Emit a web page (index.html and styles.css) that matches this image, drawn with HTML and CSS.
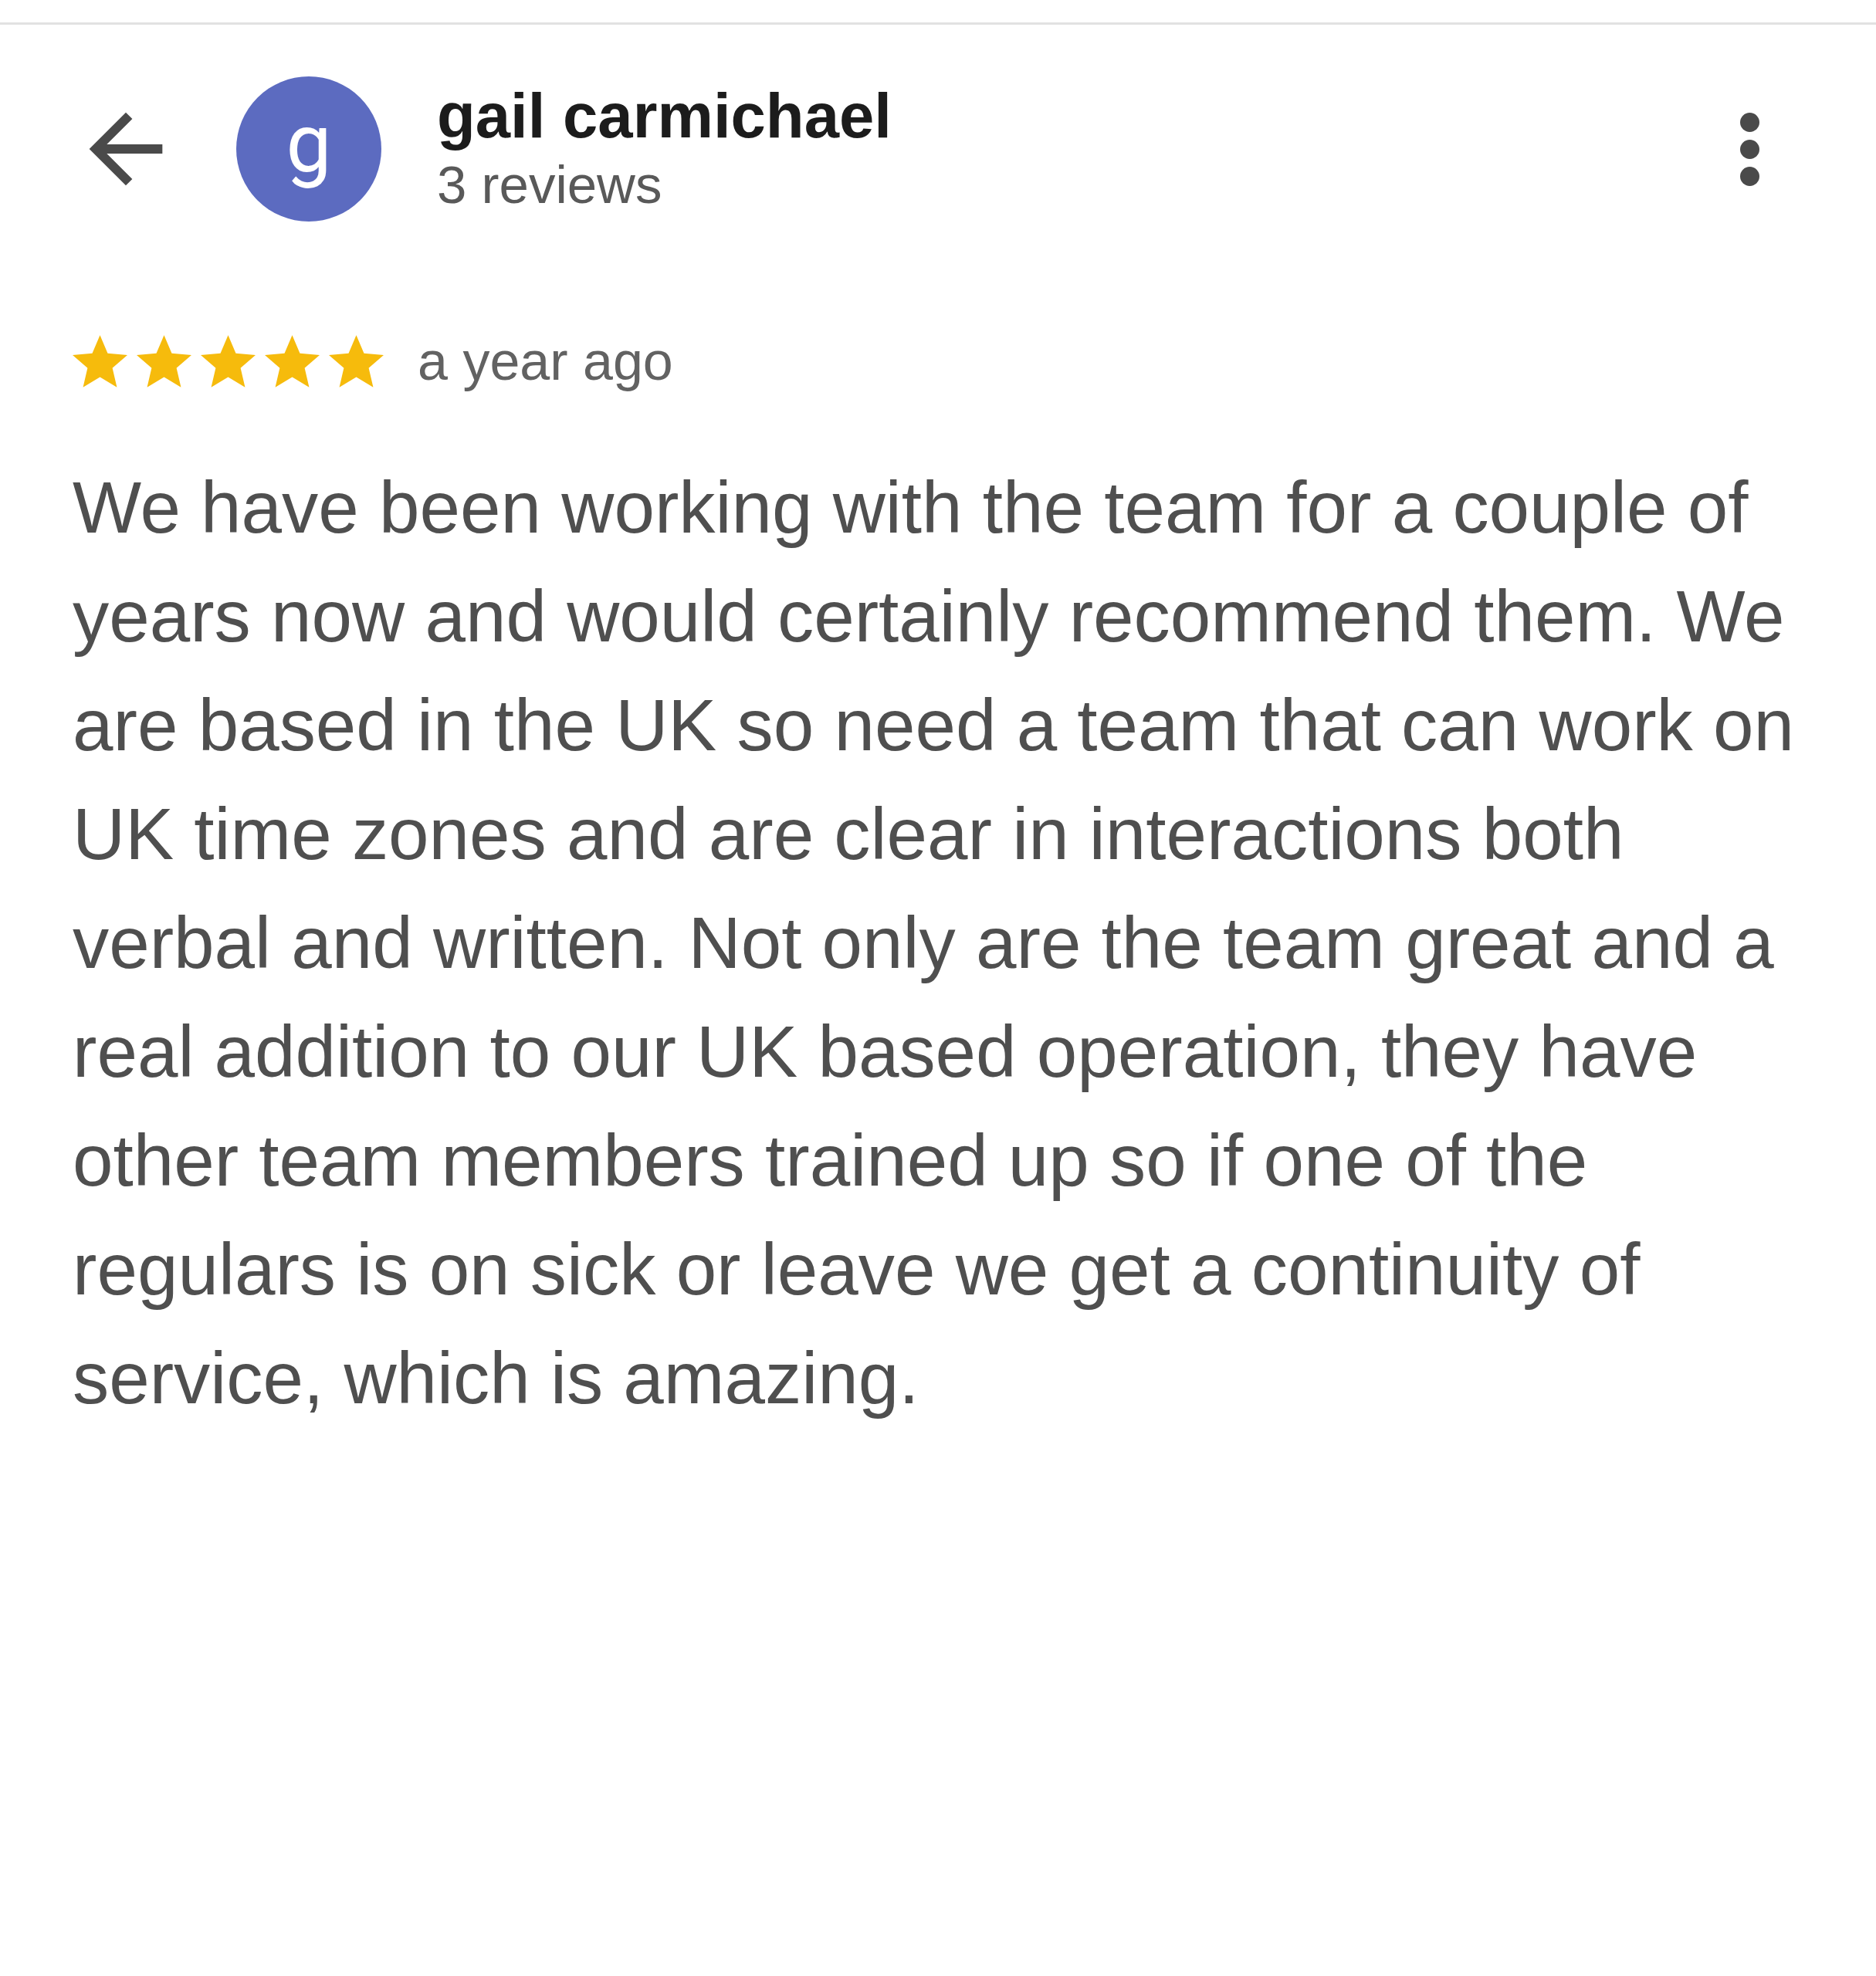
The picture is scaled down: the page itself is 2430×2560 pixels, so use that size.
FILE: index.html
```html
<!DOCTYPE html>
<html lang="en">
<head>
<meta charset="utf-8">
<title>Review</title>
<link rel="stylesheet" href="styles.css">
</head>
<body>
<div class="topline"></div>
<header class="header">
  <svg class="back" viewBox="0 0 24 24" aria-label="Back"><path d="M20 11H7.83l5.59-5.59L12 4l-8 8 8 8 1.41-1.41L7.83 13H20v-2z"/></svg>
  <div class="avatar"><span>g</span></div>
  <div class="who">
    <div class="name">gail carmichael</div>
    <div class="count">3 reviews</div>
  </div>
  <div class="more" aria-label="More options">
    <span class="dot"></span><span class="dot"></span><span class="dot"></span>
  </div>
</header>
<section class="meta">
  <div class="stars">
    <svg class="star" viewBox="2 2 20 19"><path d="M12 17.27L18.18 21l-1.64-7.03L22 9.24l-7.19-.61L12 2 9.19 8.63 2 9.24l5.46 4.73L5.82 21z"/></svg>
    <svg class="star" viewBox="2 2 20 19"><path d="M12 17.27L18.18 21l-1.64-7.03L22 9.24l-7.19-.61L12 2 9.19 8.63 2 9.24l5.46 4.73L5.82 21z"/></svg>
    <svg class="star" viewBox="2 2 20 19"><path d="M12 17.27L18.18 21l-1.64-7.03L22 9.24l-7.19-.61L12 2 9.19 8.63 2 9.24l5.46 4.73L5.82 21z"/></svg>
    <svg class="star" viewBox="2 2 20 19"><path d="M12 17.27L18.18 21l-1.64-7.03L22 9.24l-7.19-.61L12 2 9.19 8.63 2 9.24l5.46 4.73L5.82 21z"/></svg>
    <svg class="star" viewBox="2 2 20 19"><path d="M12 17.27L18.18 21l-1.64-7.03L22 9.24l-7.19-.61L12 2 9.19 8.63 2 9.24l5.46 4.73L5.82 21z"/></svg>
  </div>
  <span class="when">a year ago</span>
</section>
<p class="review">We have been working with the team for a couple of years now and would certainly recommend them. We are based in the UK so need a team that can work on UK time zones and are clear in interactions both verbal and written. Not only are the team great and a real addition to our UK based operation, they have other team members trained up so if one of the regulars is on sick or leave we get a continuity of service, which is amazing.</p>
</body>
</html>
```

FILE: styles.css
```css
* { box-sizing: border-box; }

html, body {
  margin: 0;
  padding: 0;
  background: #ffffff;
}

body {
  font-family: "Liberation Sans", Arial, Helvetica, sans-serif;
  width: 2430px;
  min-height: 2560px;
}

.topline {
  height: 32px;
  border-bottom: 3px solid #e2e2e2;
}

.header {
  display: flex;
  align-items: center;
  height: 322px;
  padding: 0 151px 0 92px;
}

.back {
  width: 142px;
  height: 142px;
  fill: #4a4a4a;
  flex: none;
}

.avatar {
  width: 188px;
  height: 188px;
  border-radius: 50%;
  background: #5c6bc0;
  margin-left: 72px;
  display: flex;
  align-items: center;
  justify-content: center;
  flex: none;
  padding-bottom: 14px;
}

.avatar span {
  color: #ffffff;
  font-size: 105px;
  line-height: 1;
  font-family: Roboto, "Liberation Sans", sans-serif;
}

.who {
  margin-left: 72px;
  display: flex;
  flex-direction: column;
}

.name {
  font-size: 81.5px;
  font-weight: 700;
  line-height: 94px;
  color: #1c1c1c;
}

.count {
  font-size: 69px;
  line-height: 86px;
  color: #595959;
}

.more {
  margin-left: auto;
  display: flex;
  flex-direction: column;
  gap: 10px;
}

.dot {
  width: 25px;
  height: 25px;
  border-radius: 50%;
  background: #4a4a4a;
}

.meta {
  display: flex;
  align-items: center;
  height: 70px;
  margin-top: 79px;
  padding-left: 94px;
}

.stars {
  display: flex;
  gap: 12px;
}

.star {
  width: 71px;
  height: 70px;
  fill: #f6bb0c;
}

.when {
  margin-left: 44px;
  font-size: 70px;
  color: #626262;
}

.review {
  margin: 84px 0 0;
  padding: 0 70px 0 94px;
  font-size: 94.4px;
  line-height: 141px;
  color: #4f4f4f;
}
```
